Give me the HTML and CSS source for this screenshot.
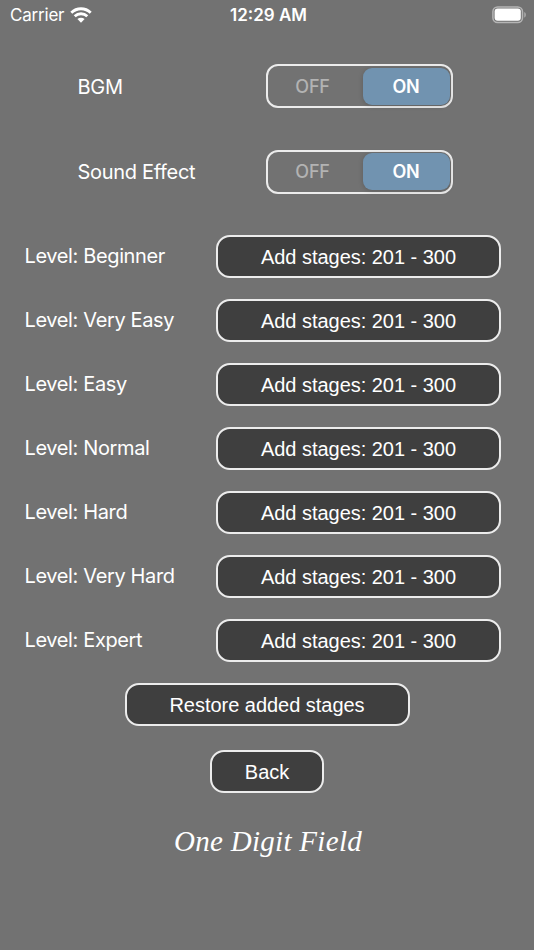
FILE: index.html
```
<!DOCTYPE html>
<html lang="en">
<head>
<meta charset="utf-8">
<title>One Digit Field</title>
<link rel="stylesheet" href="styles.css">
</head>
<body>
<header class="status">
  <div class="carrier"><span>Carrier</span>
    <svg class="wifi" width="22" height="16" viewBox="0 0 22 16"><path d="M1.3 5.7C6.8.5 15.2.5 20.7 5.7" /><path d="M4.7 9.2C8.3 5.9 13.7 5.9 17.3 9.2"/><path class="dot" d="M7.4 12.1C9.5 10.3 12.5 10.3 14.6 12.1L11 15.7Z"/></svg>
  </div>
  <div class="time">12:29 AM</div>
  <svg class="battery" width="35" height="18" viewBox="0 0 35 18"><rect class="shell" x=".9" y=".9" width="29.6" height="15.7" rx="4.8"/><rect class="charge" x="2.6" y="2.6" width="26.2" height="12.2" rx="3"/><path class="cap" d="M32.2 6c2.3.8 2.3 4.8 0 5.6z"/></svg>
</header>
<main>
  <section class="toggles">
    <div class="toggle-row"><span class="label">BGM</span><div class="segment"><span class="off">OFF</span><span class="on">ON</span></div></div>
    <div class="toggle-row"><span class="label">Sound Effect</span><div class="segment"><span class="off">OFF</span><span class="on">ON</span></div></div>
  </section>
  <section class="levels">
    <div class="level"><span class="label">Level: Beginner</span><button>Add stages: 201 - 300</button></div>
    <div class="level"><span class="label">Level: Very Easy</span><button>Add stages: 201 - 300</button></div>
    <div class="level"><span class="label">Level: Easy</span><button>Add stages: 201 - 300</button></div>
    <div class="level"><span class="label">Level: Normal</span><button>Add stages: 201 - 300</button></div>
    <div class="level"><span class="label">Level: Hard</span><button>Add stages: 201 - 300</button></div>
    <div class="level"><span class="label">Level: Very Hard</span><button>Add stages: 201 - 300</button></div>
    <div class="level"><span class="label">Level: Expert</span><button>Add stages: 201 - 300</button></div>
  </section>
  <section class="actions">
    <button>Restore added stages</button>
    <button class="back">Back</button>
  </section>
  <footer class="brand">One Digit Field</footer>
</main>
</body>
</html>
```
FILE: styles.css
```
* { box-sizing: border-box; }
body {
  margin: 0;
  height: 950px;
  overflow: hidden;
  background: #727272;
  color: #fff;
  font-family: Inter, "Liberation Sans", sans-serif;
}
.status {
  display: grid;
  grid-template-columns: 1fr auto 1fr;
  align-items: center;
  height: 30px;
  padding: 0 7px 0 10px;
  font-size: 17px;
}
.carrier { display: flex; align-items: center; gap: 6px; letter-spacing: -0.2px; }
.wifi { fill: none; stroke: #fff; stroke-width: 2.9; }
.wifi .dot { fill: #fff; stroke: none; }
.time { font-weight: 600; font-size: 17px; }
.battery { justify-self: end; margin-top: -1px; }
.shell { fill: none; stroke: #b5b5b5; stroke-width: 1.5; }
.charge { fill: #fff; }
.cap { fill: #a8a8a8; }
main { padding-top: 34.4px; }
.toggles { display: flex; flex-direction: column; gap: 41.5px; }
.toggle-row {
  display: grid;
  grid-template-columns: 188.5px 186.5px;
  align-items: center;
  padding-left: 77.5px;
}
.label { font-size: 20px; letter-spacing: -0.37px; white-space: nowrap; }
.toggles .label { padding-top: 0.4px; letter-spacing: -0.3px; }
.levels .label { padding-bottom: 0.4px; }
.segment {
  display: grid;
  grid-template-columns: 1fr 87px;
  height: 44px;
  padding: 1.5px 1px 1.5px 1.5px;
  border: 2px solid #ececec;
  border-radius: 12px;
  font-size: 18px;
  font-weight: 500;
}
.segment span { display: flex; align-items: center; justify-content: center; }
.segment .off { color: #b3b3b3; padding-right: 7px; letter-spacing: -0.2px; }
.segment .on {
  background: #7193b0;
  border-radius: 9px;
  font-weight: 600;
  letter-spacing: -0.2px;
  box-shadow: 0 1px 5px rgba(0, 0, 0, .18);
}
.levels { display: flex; flex-direction: column; gap: 21px; margin-top: 41px; }
.level {
  display: grid;
  grid-template-columns: 191.5px 285px;
  align-items: center;
  padding-left: 24.5px;
}
button {
  height: 43px;
  width: 285px;
  padding: 2px 0 0;
  border: 2px solid #ececec;
  border-radius: 14px;
  background: #3f3f3f;
  color: #fff;
  font: 20px "Liberation Sans", sans-serif;
}
.levels button, .actions button { letter-spacing: -0.03px; }
.actions { display: flex; flex-direction: column; align-items: center; gap: 24px; margin-top: 21px; }
.actions .back { width: 114px; }
.brand {
  margin-top: 28px;
  padding-left: 2px;
  text-align: center;
  font: italic 29px/40px "Liberation Serif", serif;
  letter-spacing: 0.3px;
}
```
